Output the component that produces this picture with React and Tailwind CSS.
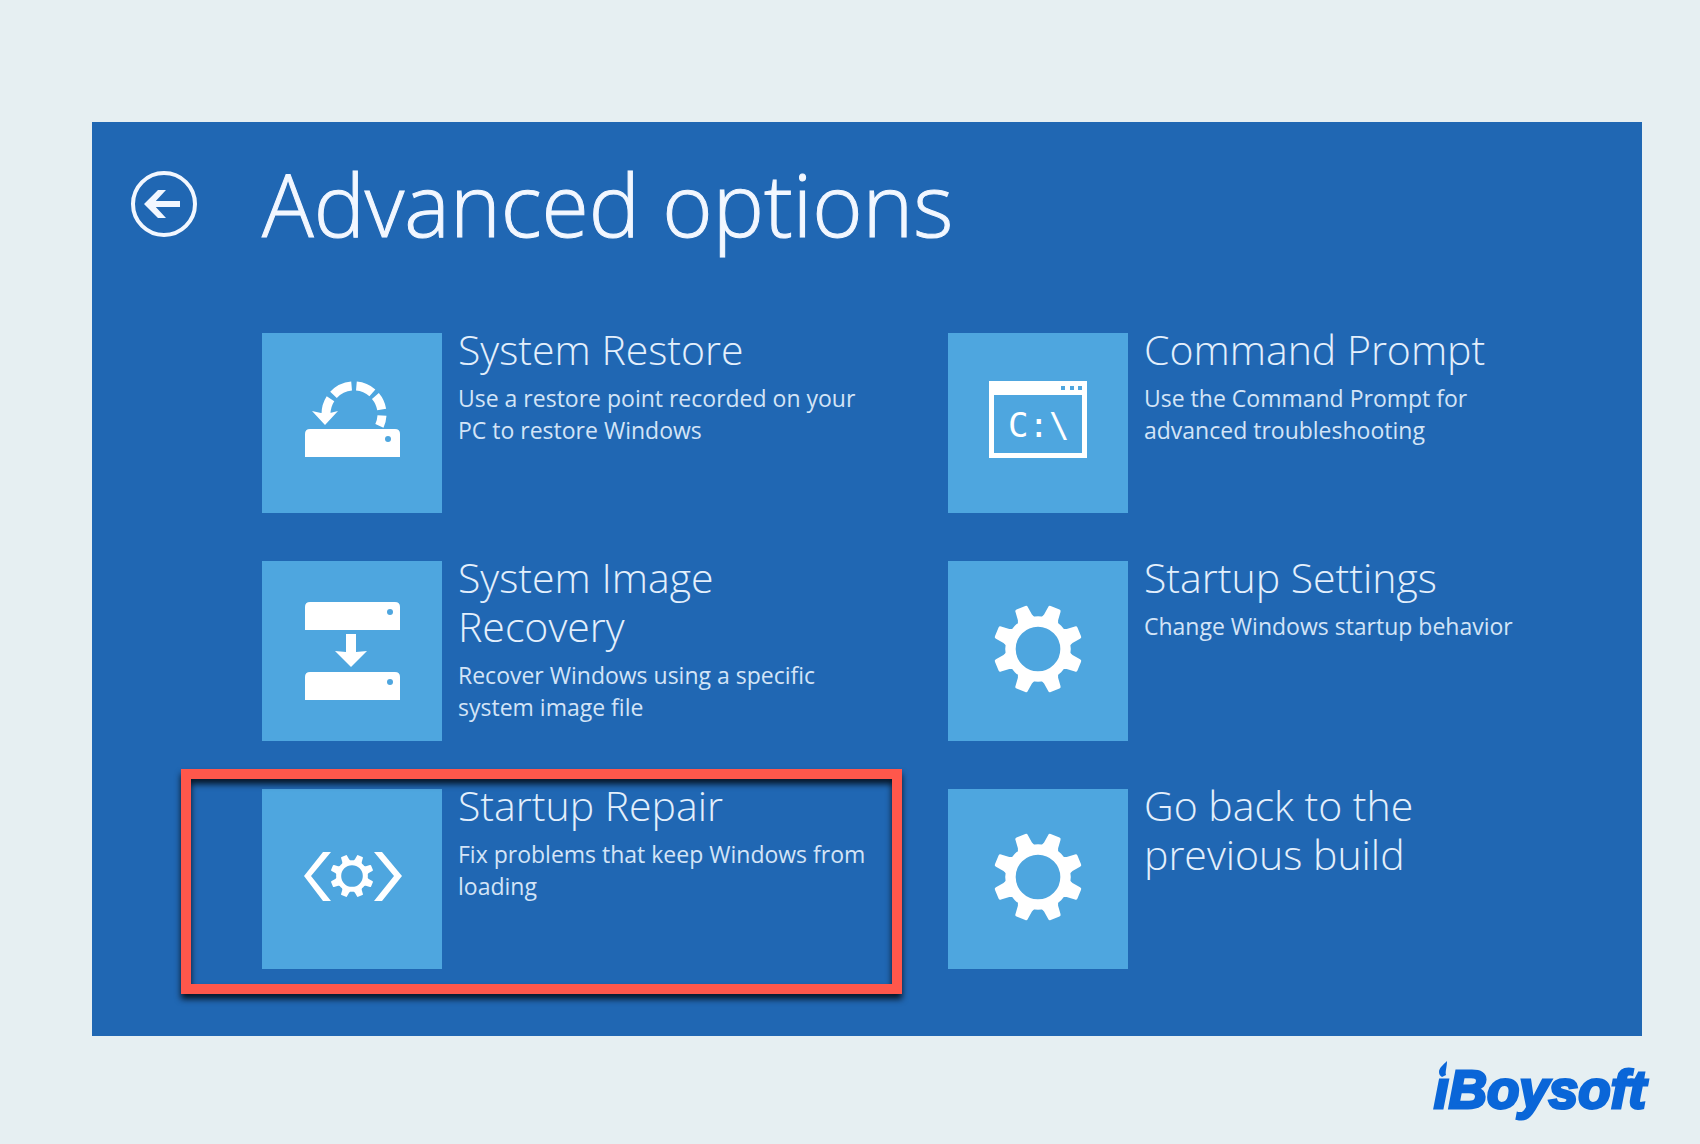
import React from 'react';

const arc = (cx, cy, r, from, to) => {
    const point = (deg) => {
        const a = (deg * Math.PI) / 180;
        return `${(cx + r * Math.cos(a)).toFixed(1)} ${(cy - r * Math.sin(a)).toFixed(1)}`;
    };
    return `M${point(from)} A${r} ${r} 0 0 1 ${point(to)}`;
};

function Drive({y, dotX = 128}) {
    return (
        <>
            <path d={`M43 ${y + 28}V${y + 5}q0 -5 5 -5H133q5 0 5 5V${y + 28}Z`} fill="#fff"/>
            <circle cx={dotX} cy={y + 10} r="3" fill="#4ea6df"/>
        </>
    );
}

function Gear({cx, cy, scale = 1}) {
    return (
        <g transform={`translate(${cx} ${cy}) scale(${scale})`} fill="#fff">
            <circle r="29" fill="none" stroke="#fff" strokeWidth="11"/>
            {[22.5, 67.5, 112.5, 157.5, 202.5, 247.5, 292.5, 337.5].map((deg) => (
                <path key={deg} d="M-5 -47H5Q7 -47 7 -45L8 -36L10 -31H-10L-8 -36L-7 -45Q-7 -47 -5 -47Z" transform={`rotate(${deg})`}/>
            ))}
        </g>
    );
}

function RestoreIcon() {
    return (
        <svg viewBox="0 0 180 180" className="h-full w-full" aria-hidden="true">
            {[[180, 147], [137, 95], [85, 49], [40, 9], [-3, -25]].map(([from, to]) => (
                <path key={from} d={arc(92, 81, 28, from, to)} fill="none" stroke="#fff" strokeWidth="9"/>
            ))}
            <path d="M50 78L59 80H68L76 78L63 92Z" fill="#fff"/>
            <Drive y={96} dotX={126}/>
        </svg>
    );
}

function ImageRecoveryIcon() {
    return (
        <svg viewBox="0 0 180 180" className="h-full w-full" aria-hidden="true">
            <Drive y={41}/>
            <path d="M84 73H94V91L105 90L89 106L73 90L84 91Z" fill="#fff"/>
            <Drive y={111}/>
        </svg>
    );
}

function RepairIcon() {
    return (
        <svg viewBox="0 0 180 180" className="h-full w-full" aria-hidden="true">
            <path d="M61 63H69L49 87L69 112H61L42 87Z" fill="#fff"/>
            <path d="M112 63H120L140 87L120 112H112L132 87Z" fill="#fff"/>
            <Gear cx={90} cy={87} scale={0.46}/>
        </svg>
    );
}

function PromptIcon() {
    return (
        <svg viewBox="0 0 180 180" className="h-full w-full" aria-hidden="true">
            <path d="M41 48H139V125H41ZM46 62V120H134V62Z" fill="#fff" fillRule="evenodd"/>
            <path d="M113 53h4v4h-4zM122 53h4v4h-4zM130 53h4v4h-4z" fill="#4ea6df"/>
            <text x="60" y="104" fontSize="34" fill="#fff" fontFamily="'DejaVu Sans Mono', monospace">C:\</text>
        </svg>
    );
}

function SettingsIcon() {
    return (
        <svg viewBox="0 0 180 180" className="h-full w-full" aria-hidden="true">
            <Gear cx={90} cy={88} scale={0.95}/>
        </svg>
    );
}

const options = [
    {title: 'System Restore', text: 'Use a restore point recorded on your PC to restore Windows', Icon: RestoreIcon},
    {title: 'Command Prompt', text: 'Use the Command Prompt for advanced troubleshooting', Icon: PromptIcon},
    {title: 'System Image Recovery', text: 'Recover Windows using a specific system image file', Icon: ImageRecoveryIcon},
    {title: 'Startup Settings', text: 'Change Windows startup behavior', Icon: SettingsIcon},
    {title: 'Startup Repair', text: 'Fix problems that keep Windows from loading', Icon: RepairIcon, highlighted: true},
    {title: 'Go back to the previous build', Icon: SettingsIcon},
];

function Option({title, text, Icon, highlighted}) {
    return (
        <div className="relative">
            <button type="button" className="flex w-full items-start gap-4 text-left">
                <span className="block size-[180px] shrink-0 bg-[#4ea6df]">
                    <Icon/>
                </span>
                <span className="block max-w-[410px]">
                    <span className="-mt-2 block text-[41px] leading-[49px] font-light text-[#e3effc]">{title}</span>
                    {text && <span className="mt-2 block text-[23px] leading-8 text-[#d3e4f7]">{text}</span>}
                </span>
            </button>
            {highlighted && (
                <div className="pointer-events-none absolute -top-5 -left-[81px] h-[225px] w-[721px] border-10 border-[#ff574b] drop-shadow-[0_5px_3px_rgba(0,0,0,0.8)]"/>
            )}
        </div>
    );
}

function Logo() {
    return (
        <a href="#" aria-label="iBoysoft" className="relative block font-['Liberation_Sans',sans-serif] text-[53px] leading-[60px] font-bold text-[#0a66d8] italic [-webkit-text-stroke:3px_#0a66d8]">
            <svg viewBox="0 0 10 20" className="absolute top-0 left-1 h-5 w-[10px]" aria-hidden="true">
                <path d="M9 1C5 5 1 8 1 12C1 14 2 16 4 17L8 15C7 12 9 7 9 1Z" fill="#0a66d8"/>
            </svg>
            ıBoysoft
        </a>
    );
}

export default function App() {
    return (
        <div className="min-h-screen bg-[#e6eff2] pt-[122px] pr-[58px] pl-[92px] font-['Open_Sans',sans-serif]">
            <main className="bg-[#2067b3] pb-[67px]">
                <header className="flex items-center pt-6 pl-[38px]">
                    <button type="button" aria-label="Back" className="size-[68px]">
                        <svg viewBox="0 0 68 68" fill="none" stroke="#f2f7ff" aria-hidden="true">
                            <circle cx="34" cy="34" r="31" strokeWidth="4"/>
                            <path d="M50 34H19" strokeWidth="6"/>
                            <path d="M36 20H28L14 34L28 48H36L23 34Z" fill="#f2f7ff" stroke="none"/>
                        </svg>
                    </button>
                    <h1 className="ml-16 text-[86px] leading-[115px] font-light text-[#f2f7ff] [-webkit-text-stroke:1px_#f2f7ff]">Advanced options</h1>
                </header>
                <div className="mt-[72px] grid grid-cols-2 gap-y-12 pr-2 pl-[170px]">
                    {options.map((option) => (
                        <Option key={option.title} {...option}/>
                    ))}
                </div>
            </main>
            <footer className="-mr-1 flex justify-end pt-6">
                <Logo/>
            </footer>
        </div>
    );
}
